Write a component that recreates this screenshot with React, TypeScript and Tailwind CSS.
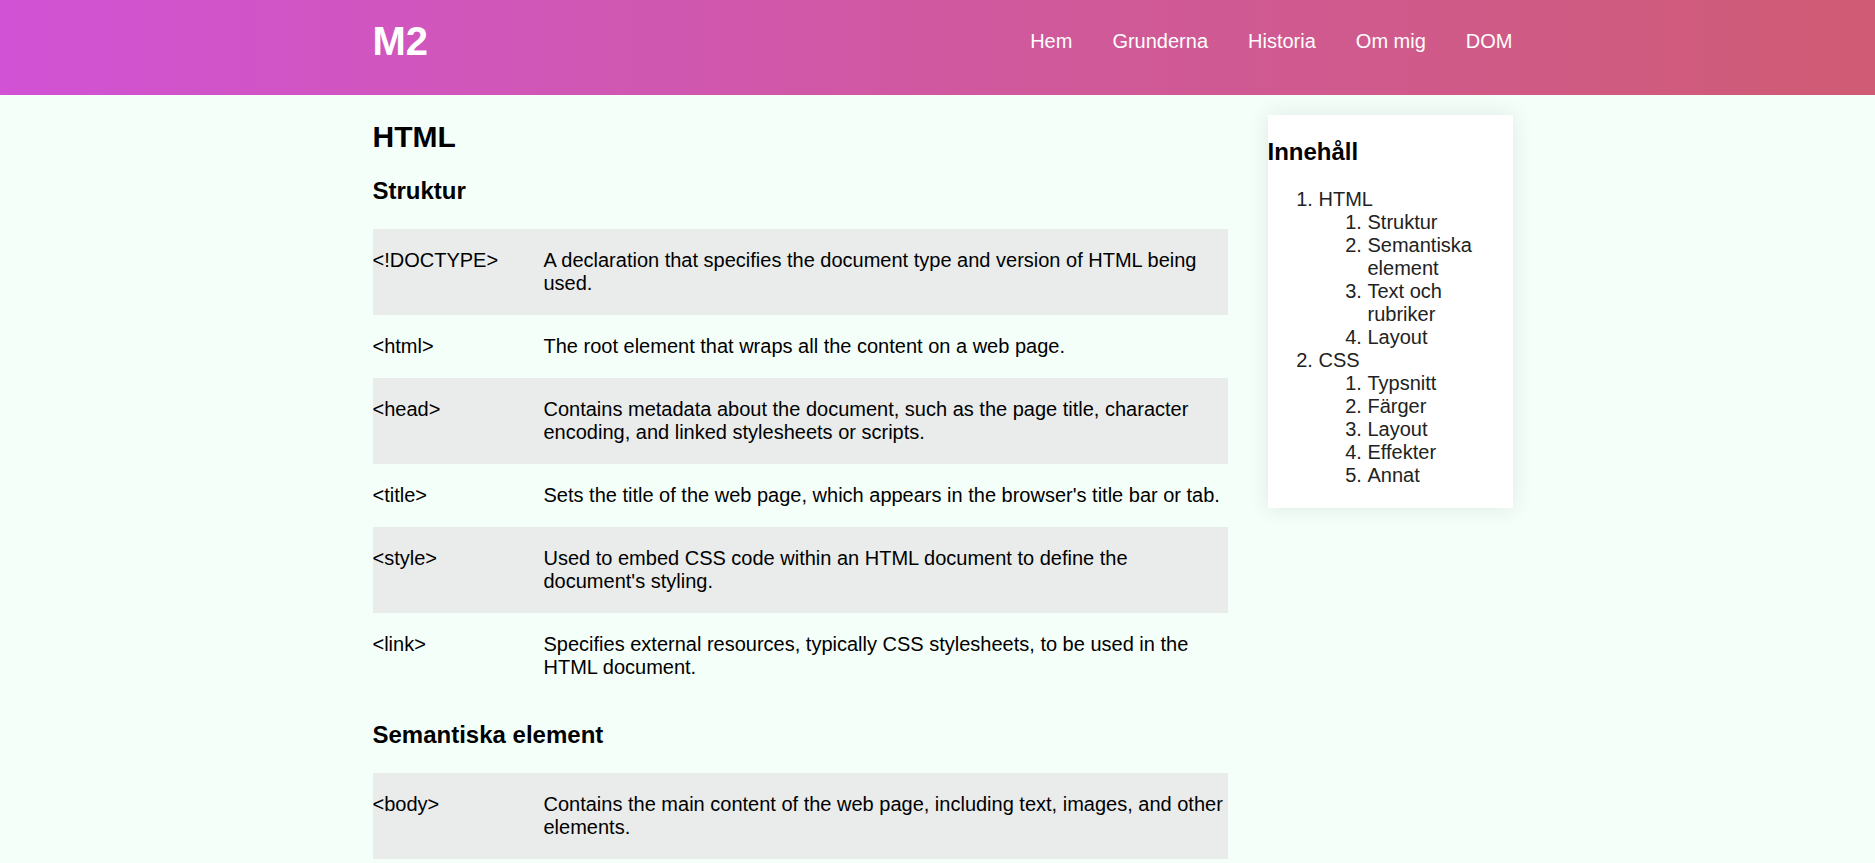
import React from "react";

type Row = { tag: string; lines: string[] };

const struktur: Row[] = [
  {
    tag: "<!DOCTYPE>",
    lines: [
      "A declaration that specifies the document type and version of HTML being",
      "used.",
    ],
  },
  { tag: "<html>", lines: ["The root element that wraps all the content on a web page."] },
  {
    tag: "<head>",
    lines: [
      "Contains metadata about the document, such as the page title, character",
      "encoding, and linked stylesheets or scripts.",
    ],
  },
  {
    tag: "<title>",
    lines: ["Sets the title of the web page, which appears in the browser's title bar or tab."],
  },
  {
    tag: "<style>",
    lines: ["Used to embed CSS code within an HTML document to define the", "document's styling."],
  },
  {
    tag: "<link>",
    lines: [
      "Specifies external resources, typically CSS stylesheets, to be used in the",
      "HTML document.",
    ],
  },
];

const semantiska: Row[] = [
  {
    tag: "<body>",
    lines: [
      "Contains the main content of the web page, including text, images, and other",
      "elements.",
    ],
  },
];

function Table({ rows }: { rows: Row[] }) {
  return (
    <div className="flex flex-col">
      {rows.map((r, i) => (
        <div
          key={r.tag}
          className={
            "grid grid-cols-[171px_1fr] py-[20px] text-[20px] leading-[23px] text-black " +
            (i % 2 === 0 ? "bg-[#e9eceb]" : "")
          }
        >
          <div>{r.tag}</div>
          <div>
            {r.lines.map((l) => (
              <div key={l} className="whitespace-nowrap">
                {l}
              </div>
            ))}
          </div>
        </div>
      ))}
    </div>
  );
}

const nav = ["Hem", "Grunderna", "Historia", "Om mig", "DOM"];

export default function App() {
  return (
    <div
      className="min-h-screen bg-[#f5fffa]"
      style={{ fontFamily: '"Liberation Sans", Arial, sans-serif' }}
    >
      <header className="h-[95px] bg-gradient-to-r from-[#d152d5] via-[#d058a0] to-[#cf5b74] pt-[18px]">
        <div className="mx-auto flex h-[46px] w-[1150px] items-center justify-between pl-[10px]">
          <div className="text-[40px] font-bold leading-[46px] text-white">M2</div>
          <nav className="flex gap-[40px] text-[20px] leading-[23px] text-white">
            {nav.map((n) => (
              <span key={n}>{n}</span>
            ))}
          </nav>
        </div>
      </header>

      <div className="mx-auto flex w-[1150px] items-start gap-[40px] pl-[10px]">
        <main className="w-[855px] shrink-0">
          <h1 className="mt-[23px] text-[30px] font-bold leading-[37px] text-black">HTML</h1>
          <h2 className="mb-[24px] mt-[22px] text-[24px] font-bold leading-[28px] text-black">
            Struktur
          </h2>
          <Table rows={struktur} />
          <h2 className="mb-[24px] mt-[22px] text-[24px] font-bold leading-[28px] text-black">
            Semantiska element
          </h2>
          <Table rows={semantiska} />
        </main>

        <aside className="mt-[20px] w-[245px] shrink-0 bg-white pb-[21px] pt-[23px] shadow-[0_0_20px_rgba(0,40,20,0.1)]">
          <h2 className="text-[24px] font-bold leading-[28px] text-black">Innehåll</h2>
          <ol className="mt-[22px] list-decimal pl-[51px] text-[20px] leading-[23px] text-[#222]">
            <li>
              HTML
              <ol className="list-decimal pl-[49px]">
                <li>Struktur</li>
                <li>Semantiska element</li>
                <li>Text och rubriker</li>
                <li>Layout</li>
              </ol>
            </li>
            <li>
              CSS
              <ol className="list-decimal pl-[49px]">
                <li>Typsnitt</li>
                <li>Färger</li>
                <li>Layout</li>
                <li>Effekter</li>
                <li>Annat</li>
              </ol>
            </li>
          </ol>
        </aside>
      </div>
    </div>
  );
}
